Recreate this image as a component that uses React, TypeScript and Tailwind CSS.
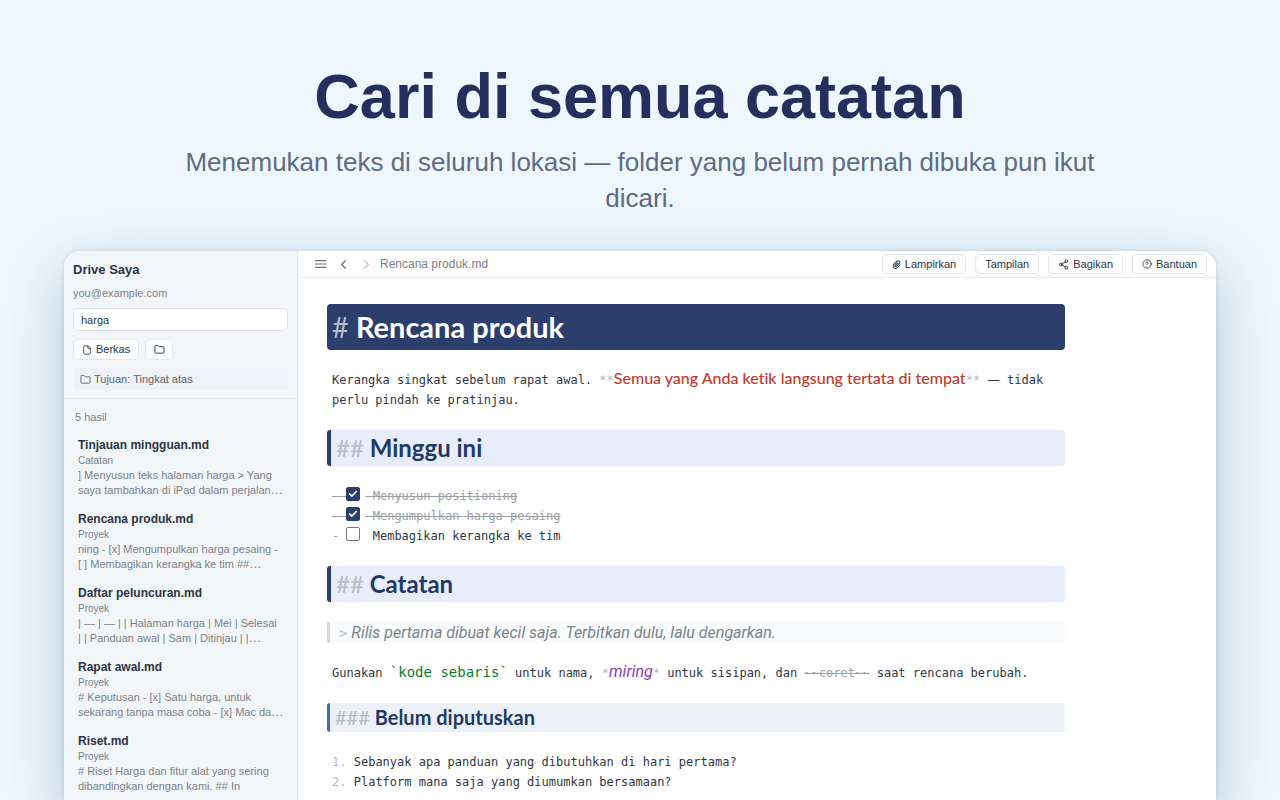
import React from "react";
import { Check, ChevronLeft, ChevronRight, CircleHelp, File, Folder, Share2 } from "lucide-react";
import { FaPaperclip } from "react-icons/fa6";

type Result = { title: string; folder: string; lines: [string, string]; cut: boolean };

const results: Result[] = [
  {
    title: "Tinjauan mingguan.md",
    folder: "Catatan",
    lines: ["] Menyusun teks halaman harga > Yang", "saya tambahkan di iPad dalam perjalan"],
    cut: true,
  },
  {
    title: "Rencana produk.md",
    folder: "Proyek",
    lines: ["ning - [x] Mengumpulkan harga pesaing -", "[ ] Membagikan kerangka ke tim ##"],
    cut: true,
  },
  {
    title: "Daftar peluncuran.md",
    folder: "Proyek",
    lines: ["| — | — | | Halaman harga | Mei | Selesai", "| | Panduan awal | Sam | Ditinjau | |"],
    cut: true,
  },
  {
    title: "Rapat awal.md",
    folder: "Proyek",
    lines: ["# Keputusan - [x] Satu harga, untuk", "sekarang tanpa masa coba - [x] Mac da"],
    cut: true,
  },
  {
    title: "Riset.md",
    folder: "Proyek",
    lines: ["# Riset Harga dan fitur alat yang sering", "dibandingkan dengan kami. ## In"],
    cut: false,
  },
];

const tasks = [
  { text: "Menyusun positioning", done: true },
  { text: "Mengumpulkan harga pesaing", done: true },
  { text: "Membagikan kerangka ke tim", done: false },
];

const questions = [
  "Sebanyak apa panduan yang dibutuhkan di hari pertama?",
  "Platform mana saja yang diumumkan bersamaan?",
];

function ToolButton({ icon, children }: { icon?: React.ReactNode; children: React.ReactNode }) {
  return (
    <button
      type="button"
      className="flex h-5 items-center gap-1 rounded-[5px] border border-[#e3e6ea] bg-white px-[9px] text-[11px] text-[#2b3445]"
    >
      {icon}
      {children}
    </button>
  );
}

function Sidebar() {
  return (
    <aside className="flex w-[234px] shrink-0 flex-col overflow-hidden border-r border-[#dfe3e7] bg-[#f3f6f8]">
      <div className="border-b border-[#e6eaed] px-[9px] pt-[10px] pb-2">
        <h2 className="text-[13px] leading-[18px] font-bold text-[#2b3445]">Drive Saya</h2>
        <p className="mt-[7px] text-[11px] leading-[14px] text-[#7b8189]">you@example.com</p>
        <input
          type="text"
          aria-label="Cari catatan"
          defaultValue="harga"
          className="mt-2 block h-[23px] w-full rounded-[5px] border border-[#dde1e6] bg-white px-[7px] text-[11px] text-[#2b3445] outline-none"
        />
        <div className="mt-2 flex gap-[6px]">
          <button
            type="button"
            className="flex h-[21px] items-center gap-1 rounded-[5px] border border-[#e3e6ea] bg-white px-2 text-[11px] text-[#2b3445]"
          >
            <File size={10} strokeWidth={2} />
            Berkas
          </button>
          <button
            type="button"
            aria-label="Folder baru"
            className="flex h-[21px] w-7 items-center justify-center rounded-[5px] border border-[#e3e6ea] bg-white text-[#2b3445]"
          >
            <Folder size={11} strokeWidth={2} />
          </button>
        </div>
        <div className="mt-2 flex h-[22px] items-center gap-[3px] rounded-[4px] bg-[#eef1f5] px-[7px] text-[11px] text-[#5f666f]">
          <Folder size={11} strokeWidth={2} />
          Tujuan: Tingkat atas
        </div>
      </div>
      <p className="px-[11px] pt-[11px] text-[11px] leading-[14px] text-[#7b8189]">5 hasil</p>
      <ul className="mt-3 flex flex-col gap-3">
        {results.map((r) => (
          <li key={r.title} className="pl-[14px] whitespace-nowrap">
            <h3 className="text-[12px] leading-[18px] font-bold text-[#2b3445]">{r.title}</h3>
            <p className="text-[10px] leading-[14px] text-[#7b8189]">{r.folder}</p>
            <p className="text-[11px] leading-[15px] text-[#7b8189]">
              {r.lines[0]}
              <br />
              {r.lines[1]}
              {r.cut && <span className="font-['Noto_Sans_CJK_JP',sans-serif] leading-none">⋯</span>}
            </p>
          </li>
        ))}
      </ul>
    </aside>
  );
}

function Toolbar() {
  return (
    <header className="flex h-[27px] shrink-0 items-center justify-between border-b border-[#e8eaec] pr-[9px] pl-4">
      <nav className="flex items-center text-[#6b7078]">
        <button type="button" aria-label="Menu">
          <svg width="14" height="14" viewBox="0 0 14 14" stroke="currentColor" strokeWidth="1.2" strokeLinecap="round">
            <path d="M1.5 3.7h10.5M1.5 7h10.5M1.5 10.3h10.5" />
          </svg>
        </button>
        <button type="button" aria-label="Kembali" className="ml-2">
          <ChevronLeft size={15} strokeWidth={2} />
        </button>
        <button type="button" aria-label="Maju" className="ml-2 text-[#c3c7cc]">
          <ChevronRight size={15} strokeWidth={2} />
        </button>
        <span className="ml-[6px] text-[12px] text-[#7b8189]">Rencana produk.md</span>
      </nav>
      <div className="flex gap-[9px]">
        <ToolButton icon={<FaPaperclip size={9} />}>Lampirkan</ToolButton>
        <ToolButton>Tampilan</ToolButton>
        <ToolButton icon={<Share2 size={11} />}>Bagikan</ToolButton>
        <ToolButton icon={<CircleHelp size={10} />}>Bantuan</ToolButton>
      </div>
    </header>
  );
}

function SectionHeading({ children }: { children: React.ReactNode }) {
  return (
    <h2 className="rounded-[3px] border-l-4 border-[#2c3e6b] bg-[#e8edfb] px-[5px] font-['Lato',sans-serif] text-[24px] leading-9 font-bold text-[#1f3a66]">
      <span className="font-normal text-[#b5bac4]">##</span> {children}
    </h2>
  );
}

function Editor() {
  return (
    <article className="mt-[26px] mr-[150px] ml-[29px] flex max-w-[738px] flex-col gap-5 font-['DejaVu_Sans_Mono',monospace] text-[12px] leading-5 text-[#2f3744]">
      <h1 className="rounded-[4px] bg-[#2c3e6b] px-[5px] font-['Lato',sans-serif] text-[29px] leading-[46px] font-bold text-white">
        <span className="font-normal text-[#b4bcc8]">#</span> Rencana produk
      </h1>

      <p className="px-[5px]">
        Kerangka singkat sebelum rapat awal. <span className="text-[#b5b9bf]">**</span>
        <strong className="font-['Lato',sans-serif] text-[16px] leading-none font-medium text-[#c0392b] [font-variant-ligatures:none]">
          Semua yang Anda ketik langsung tertata di tempat
        </strong>
        <span className="text-[#b5b9bf]">**</span>{" "}
        <span className="font-['Noto_Sans_CJK_JP',sans-serif] text-[14px] leading-none">—</span> tidak perlu pindah ke
        pratinjau.
      </p>

      <SectionHeading>Minggu ini</SectionHeading>

      <ul className="px-[5px]">
        {tasks.map((t) => (
          <li key={t.text}>
            <label className={t.done ? "text-[#9a9fa6] line-through" : ""}>
              <span className="text-[#9a9fa6]">-</span>{" "}
              <span className="relative mr-[5px] inline-block h-[14px] w-[14px] align-[-1px]">
                <input
                  type="checkbox"
                  defaultChecked={t.done}
                  className="peer block h-[14px] w-[14px] appearance-none rounded-[2px] border border-[#767b82] bg-white checked:border-[#2c3e6b] checked:bg-[#2c3e6b]"
                />
                <Check
                  size={10}
                  strokeWidth={4}
                  className="pointer-events-none absolute top-[2px] left-[2px] hidden text-white peer-checked:block"
                />
              </span>{" "}
              {t.text}
            </label>
          </li>
        ))}
      </ul>

      <SectionHeading>Catatan</SectionHeading>

      <blockquote className="border-l-3 border-[#d5d9dd] bg-[#f8fafb] px-[9px] font-['Roboto',sans-serif] text-[16px] leading-[21px] text-[#7b8589] italic">
        <span className="font-['DejaVu_Sans_Mono',monospace] text-[14px] leading-none text-[#b5b9bf]">&gt;</span> Rilis
        pertama dibuat kecil saja. Terbitkan dulu, lalu dengarkan.
      </blockquote>

      <p className="px-[5px]">
        Gunakan{" "}
        <code className="font-['DejaVu_Sans_Mono',monospace] text-[14px] leading-none text-[#0a7d28]">`kode sebaris`</code>{" "}
        untuk nama, <span className="text-[#b5b9bf]">*</span>
        <em className="font-['Roboto',sans-serif] text-[16px] leading-none text-[#8e3bb0]">miring</em>
        <span className="text-[#b5b9bf]">*</span> untuk sisipan, dan <s className="text-[#9aa3a6]">~~coret~~</s> saat
        rencana berubah.
      </p>

      <h3 className="rounded-[3px] border-l-3 border-[#3f6fb0] bg-[#edf0f7] px-[5px] font-['Lato',sans-serif] text-[20px] leading-[29px] font-bold text-[#1f3a66]">
        <span className="font-normal text-[#b5bac4]">###</span> Belum diputuskan
      </h3>

      <ol className="px-[5px]">
        {questions.map((q, i) => (
          <li key={q}>
            <span className="text-[#b5b9bf]">{i + 1}.</span> {q}
          </li>
        ))}
      </ol>
    </article>
  );
}

export default function App() {
  return (
    <div className="flex h-screen flex-col overflow-hidden bg-[#eef7fd] px-16 pt-14 font-['Liberation_Sans',Arial,sans-serif]">
      <div className="shrink-0 text-center">
        <h1 className="text-[63px] leading-[80px] font-bold text-[#252f5e]">Cari di semua catatan</h1>
        <p className="mx-auto mt-2 max-w-[960px] text-[26px] leading-9 text-[#5f6b83]">
          Menemukan teks di seluruh lokasi — folder yang belum pernah dibuka pun ikut dicari.
        </p>
      </div>
      <div className="mt-[35px] flex min-h-0 flex-1 rounded-t-[16px] shadow-[0_20px_60px_rgba(40,70,100,0.28),0_0_4px_rgba(40,70,100,0.15)]">
        <div className="flex min-w-0 flex-1 overflow-hidden rounded-t-[16px] bg-white">
          <Sidebar />
          <main className="flex min-w-0 flex-1 flex-col overflow-hidden bg-white">
            <Toolbar />
            <Editor />
          </main>
        </div>
      </div>
    </div>
  );
}
